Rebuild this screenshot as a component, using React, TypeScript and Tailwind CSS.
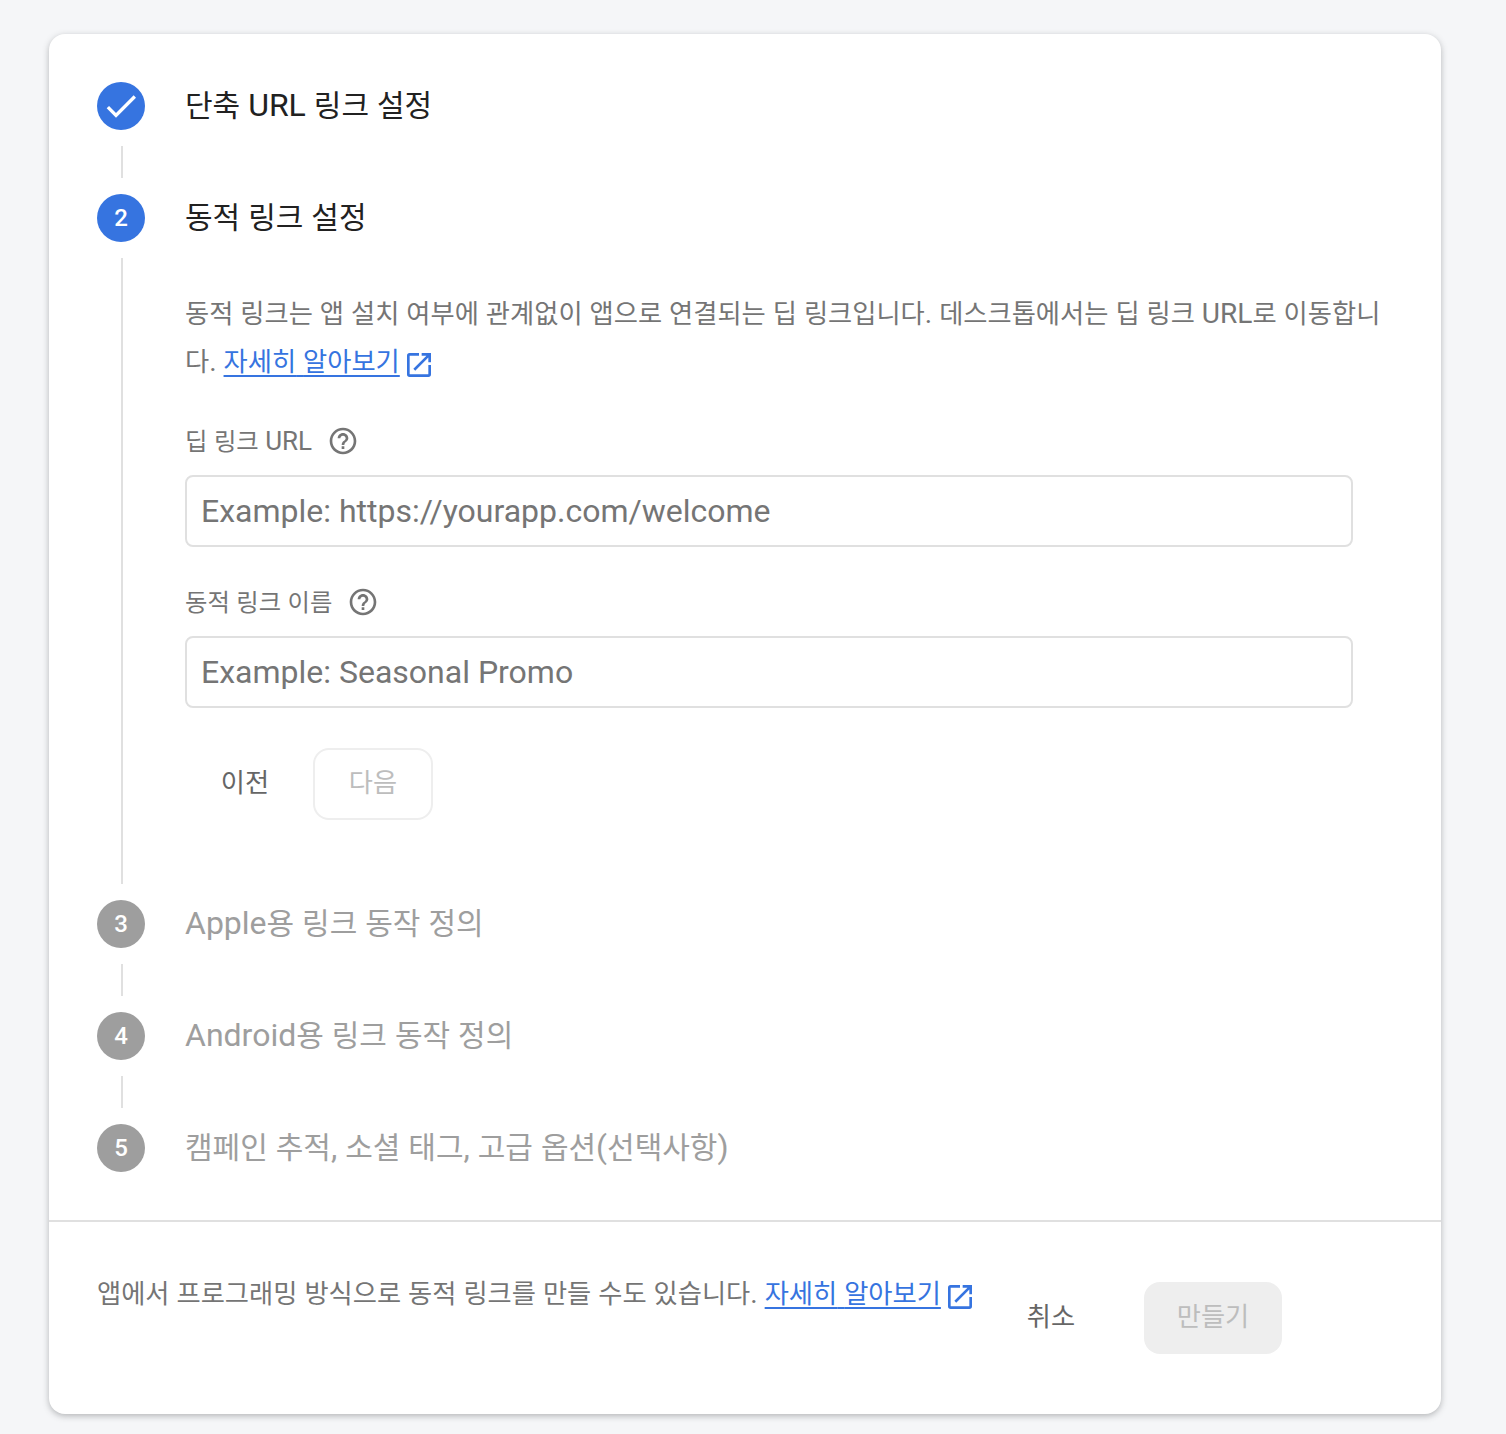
const font = { fontFamily: 'Roboto, "Noto Sans CJK KR", sans-serif' };

// Hangul sits a bit smaller than the Latin text next to it
function Mixed({ text }: { text: string }) {
  return (
    <>
      {text.split(/([가-힣]+)/).map((part, i) =>
        /[가-힣]/.test(part) ? (
          <span key={i} className="text-[0.9375em]">{part}</span>
        ) : (
          part
        )
      )}
    </>
  );
}

function ExternalIcon() {
  return (
    <svg viewBox="0 0 24 24" className="inline-block w-8 h-8 ml-[3px] -mb-[3px] fill-[#3674e0]">
      <path d="M19 19H5V5h7V3H5a2 2 0 0 0-2 2v14a2 2 0 0 0 2 2h14a2 2 0 0 0 2-2v-7h-2v7zM14 3v2h3.59l-9.83 9.83 1.41 1.41L19 6.41V10h2V3h-7z" />
    </svg>
  );
}

function HelpIcon() {
  return (
    <svg viewBox="0 0 24 24" className="w-8 h-8 fill-[#757575]">
      <path d="M11 18h2v-2h-2v2zm1-16C6.48 2 2 6.48 2 12s4.48 10 10 10 10-4.48 10-10S17.52 2 12 2zm0 18c-4.41 0-8-3.59-8-8s3.59-8 8-8 8 3.59 8 8-3.59 8-8 8zm0-14c-2.21 0-4 1.79-4 4h2c0-1.1.9-2 2-2s2 .9 2 2c0 2-3 1.75-3 5h2c0-2.25 3-2.5 3-5 0-2.21-1.79-4-4-4z" />
    </svg>
  );
}

function CheckIcon() {
  return (
    <svg viewBox="0 0 24 24" className="w-10 h-10 fill-white">
      <path d="M9 16.17L4.83 12l-1.42 1.41L9 19 21 7l-1.41-1.41z" />
    </svg>
  );
}

function StepRow({ badge, title, active }: { badge: React.ReactNode; title: string; active: boolean }) {
  return (
    <div className="flex items-center h-12">
      <div className={`w-12 h-12 rounded-full flex items-center justify-center text-white text-[24px] font-medium shrink-0 ${active ? 'bg-[#3674e0]' : 'bg-[#9e9e9e]'}`}>
        {badge}
      </div>
      <div className={`ml-10 pb-0.5 text-[32px] ${active ? 'text-[#212121]' : 'text-[#9e9e9e]'}`}>
        <Mixed text={title} />
      </div>
    </div>
  );
}

function Connector() {
  return <div className="ml-6 w-0.5 h-8 my-4 bg-[#e0e0e0]" />;
}

function Field({ label, placeholder }: { label: string; placeholder: string }) {
  return (
    <div>
      <div className="flex items-center h-8 text-[26px] text-[#757575] gap-[15px]">
        <span><Mixed text={label} /></span>
        <HelpIcon />
      </div>
      <div className="mt-[18px] w-[1168px] h-[72px] border-2 border-[#e0e0e0] rounded-lg flex items-center pl-[14px] text-[32px] text-[#757575]">
        {placeholder}
      </div>
    </div>
  );
}

export default function App() {
  return (
    <div className="bg-[#f5f6f8] h-[1434px] pt-[34px] pl-[49px]" style={font}>
      <div className="w-[1392px] h-[1380px] bg-white rounded-2xl shadow-[0_2px_6px_rgba(60,64,67,0.35)]">
        <div className="pt-12 pl-12 h-[1186px]">
          <StepRow active title="단축 URL 링크 설정" badge={<CheckIcon />} />
          <Connector />
          <StepRow active title="동적 링크 설정" badge="2" />

          <div className="flex mt-4">
            <div className="ml-6 w-0.5 h-[626px] bg-[#e0e0e0]" />
            <div className="ml-[62px] w-[1200px]">
              <p className="pt-8 text-[28.05px] leading-[48px] break-all text-[#757575]">
                <Mixed text="동적 링크는 앱 설치 여부에 관계없이 앱으로 연결되는 딥 링크입니다. 데스크톱에서는 딥 링크 URL로 이동합니다. " />
                <span className="text-[#3674e0] underline decoration-2 underline-offset-4"><Mixed text="자세히 알아보기" /></span>
                <ExternalIcon />
              </p>
              <div className="mt-[39px]">
                <Field label="딥 링크 URL" placeholder="Example: https://yourapp.com/welcome" />
              </div>
              <div className="mt-[39px]">
                <Field label="동적 링크 이름" placeholder="Example: Seasonal Promo" />
              </div>
              <div className="flex mt-10 gap-2">
                <div className="w-[120px] h-[72px] flex items-center justify-center text-[28px] text-[#666666]"><Mixed text="이전" /></div>
                <div className="w-[120px] h-[72px] flex items-center justify-center text-[28px] text-[#bdbdbd] border-2 border-[#eeeeee] rounded-2xl"><Mixed text="다음" /></div>
              </div>
            </div>
          </div>

          <div className="mt-4">
            <StepRow active={false} title="Apple용 링크 동작 정의" badge="3" />
            <Connector />
            <StepRow active={false} title="Android용 링크 동작 정의" badge="4" />
            <Connector />
            <StepRow active={false} title="캠페인 추적, 소셜 태그, 고급 옵션(선택사항)" badge="5" />
          </div>
        </div>

        <div className="h-0.5 bg-[#e0e0e0]" />

        <div className="flex items-start pl-12 pt-[60px]">
          <div className="w-[929px] text-[28.05px] leading-[48px] text-[#757575] -mt-3">
            <Mixed text="앱에서 프로그래밍 방식으로 동적 링크를 만들 수도 있습니다. " />
            <span className="text-[#3674e0] underline decoration-2 underline-offset-4"><Mixed text="자세히 알아보기" /></span>
            <ExternalIcon />
          </div>
          <div className="h-[72px] w-[50px] flex items-center justify-center whitespace-nowrap text-[28px] text-[#666666]"><Mixed text="취소" /></div>
          <div className="ml-[68px] w-[138px] h-[72px] flex items-center justify-center text-[28px] text-[#bdbdbd] bg-[#eeeeee] rounded-2xl"><Mixed text="만들기" /></div>
        </div>
      </div>
    </div>
  );
}
